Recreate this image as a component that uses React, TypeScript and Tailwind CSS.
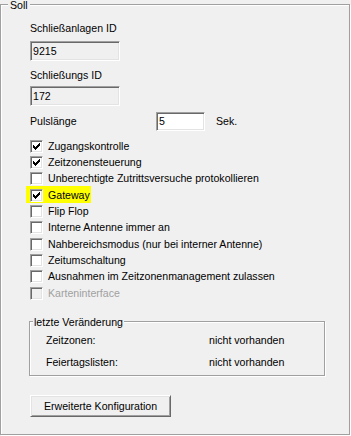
const sunken =
  "border border-t-[#a0a0a0] border-l-[#a0a0a0] border-r-white border-b-white shadow-[inset_1px_1px_0_#696969,inset_-1px_-1px_0_#e3e3e3]";

const options = [
  { label: "Zugangskontrolle", checked: true },
  { label: "Zeitzonensteuerung", checked: true },
  { label: "Unberechtigte Zutrittsversuche protokollieren", checked: false },
  { label: "Gateway", checked: true, marked: true },
  { label: "Flip Flop", checked: false },
  { label: "Interne Antenne immer an", checked: false },
  { label: "Nahbereichsmodus (nur bei interner Antenne)", checked: false },
  { label: "Zeitumschaltung", checked: false },
  { label: "Ausnahmen im Zeitzonenmanagement zulassen", checked: false },
  { label: "Karteninterface", checked: false, disabled: true },
];

// pixel check mark like the classic win32 one
const checkPixels = [
  [6, 0],
  [5, 1], [6, 1],
  [0, 2], [4, 2], [5, 2], [6, 2],
  [0, 3], [1, 3], [3, 3], [4, 3], [5, 3],
  [0, 4], [1, 4], [2, 4], [3, 4], [4, 4],
  [1, 5], [2, 5], [3, 5],
  [2, 6],
];

function CheckBox({ checked, disabled }: { checked: boolean; disabled?: boolean }) {
  return (
    <div
      className={`relative h-[13px] w-[13px] shrink-0 ${sunken} ${
        disabled ? "bg-[#f0f0f0]" : "bg-white"
      }`}
    >
      {checked && (
        <svg
          width="7"
          height="7"
          viewBox="0 0 7 7"
          shapeRendering="crispEdges"
          className="absolute left-[2px] top-[2px]"
        >
          {checkPixels.map(([x, y]) => (
            <rect key={`${x}-${y}`} x={x} y={y} width="1" height="1" fill="#000" />
          ))}
        </svg>
      )}
    </div>
  );
}

function TextBox({ value, className }: { value: string; className: string }) {
  return (
    <div className={`flex items-center pl-[2px] leading-none ${sunken} ${className}`}>
      {value}
    </div>
  );
}

export default function App() {
  return (
    <div
      className="h-[436px] w-[351px] overflow-hidden bg-[#f0f0f0] text-[10.6px] leading-[13px] text-black"
      style={{ fontFamily: '"Liberation Sans", Arial, sans-serif' }}
    >
      {/* ── Soll group ── */}
      <div className="relative mt-[4px] h-[431px] w-[350px] border border-[#a0a0a0] pl-[29px] pt-[17px] shadow-[inset_1px_1px_0_#fff,1px_1px_0_#fff]">
        <span className="absolute left-[7px] top-[-6px] bg-[#f0f0f0] px-[2px]">Soll</span>

        <div>Schließanlagen ID</div>
        <TextBox value="9215" className="mt-[6px] h-[20px] w-[90px] bg-[#f0f0f0]" />

        <div className="mt-[8px]">Schließungs ID</div>
        <TextBox value="172" className="mt-[4px] h-[20px] w-[90px] bg-[#f0f0f0]" />

        <div className="mt-[6px] flex h-[19px] items-center">
          <span className="w-[126px]">Pulslänge</span>
          <TextBox value="5" className="h-[19px] w-[49px] bg-white" />
          <span className="ml-[11px]">Sek.</span>
        </div>

        {/* Options */}
        <div className="mt-[7px] flex flex-col">
          {options.map((o) => (
            <div key={o.label} className="relative flex h-[16.33px] items-center gap-[5px]">
              {o.marked && (
                <span className="absolute left-[-4px] top-[-1px] h-[17px] w-[65px] bg-[#ffff00]" />
              )}
              <div className="relative">
                <CheckBox checked={o.checked} disabled={o.disabled} />
              </div>
              <span className={`relative whitespace-nowrap ${o.disabled ? "text-[#a0a0a0]" : ""}`}>
                {o.label}
              </span>
            </div>
          ))}
        </div>

        {/* letzte Veränderung */}
        <div className="relative ml-[-1px] mt-[20px] h-[55px] w-[296px] border border-[#a0a0a0] pl-[16px] pt-[12px] shadow-[inset_1px_1px_0_#fff,1px_1px_0_#fff]">
          <span className="absolute left-[3px] top-[-6px] bg-[#f0f0f0] px-[1px]">
            letzte Veränderung
          </span>
          <div className="flex">
            <span className="w-[163px]">Zeitzonen:</span>
            <span>nicht vorhanden</span>
          </div>
          <div className="mt-[9px] flex">
            <span className="w-[163px]">Feiertagslisten:</span>
            <span>nicht vorhanden</span>
          </div>
        </div>

        <button className="mt-[19px] flex h-[22px] w-[141px] items-center justify-center border border-t-white border-l-white border-r-[#696969] border-b-[#696969] bg-[#f0f0f0] shadow-[inset_1px_1px_0_#e3e3e3,inset_-1px_-1px_0_#a0a0a0]">
          Erweiterte Konfiguration
        </button>
      </div>
    </div>
  );
}
